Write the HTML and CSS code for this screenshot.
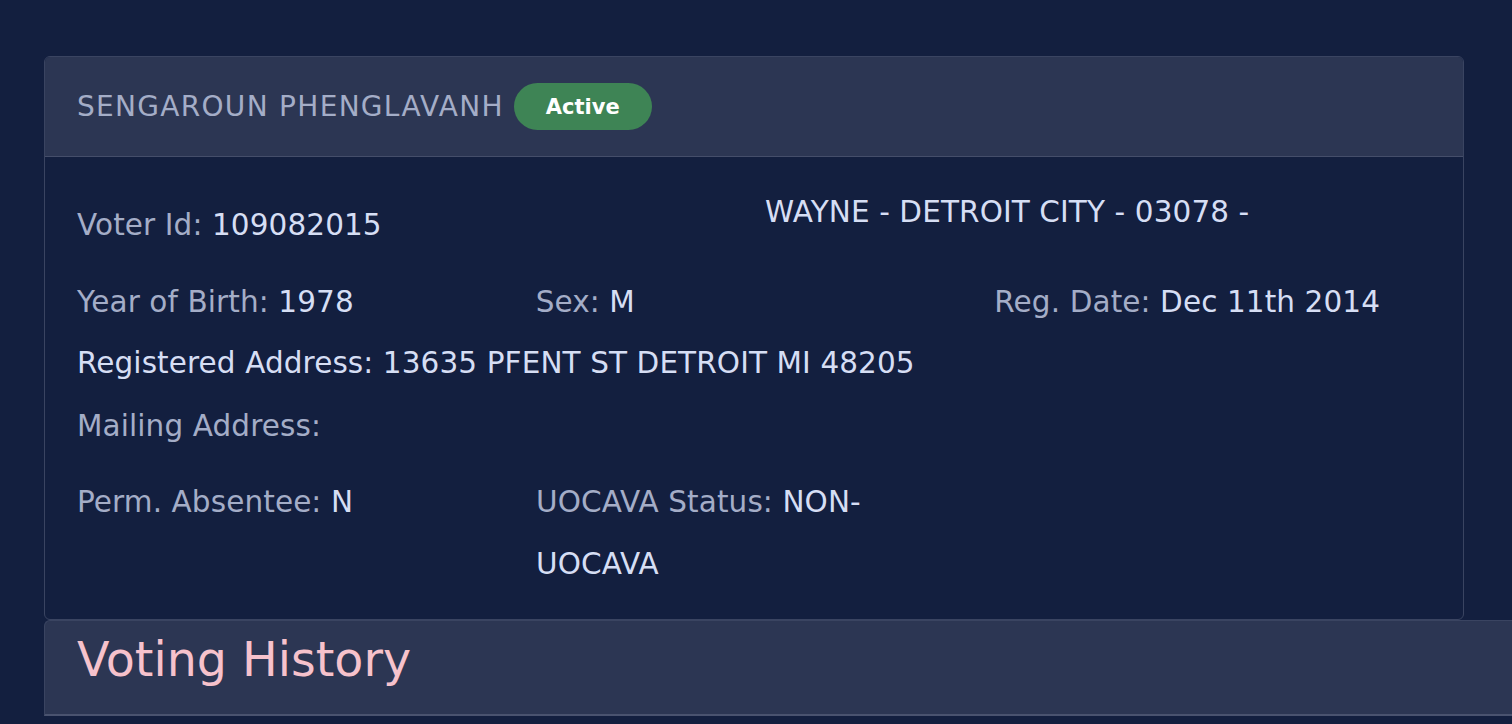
FILE: index.html
```html
<!DOCTYPE html>
<html lang="en">
<head>
<meta charset="utf-8">
<title>Voter</title>
<link rel="stylesheet" href="styles.css">
</head>
<body>
<main class="page">
  <section class="card">
    <header class="card-header">
      <span class="name">SENGAROUN PHENGLAVANH</span>
      <span class="badge">Active</span>
    </header>
    <div class="card-body">
      <div class="row row-id">
        <div class="col half id-col"><span class="label">Voter Id:</span> <span class="value">109082015</span></div>
        <div class="col half"><span class="value">WAYNE - DETROIT CITY - 03078 -</span></div>
      </div>
      <div class="row row-birth">
        <div class="col third"><span class="label">Year of Birth:</span> <span class="value">1978</span></div>
        <div class="col third"><span class="label">Sex:</span> <span class="value">M</span></div>
        <div class="col third"><span class="label">Reg. Date:</span> <span class="value">Dec 11th 2014</span></div>
      </div>
      <div class="row row-address">
        <div class="col full bright">Registered Address: 13635 PFENT ST DETROIT MI 48205</div>
      </div>
      <div class="row row-mail">
        <div class="col full"><span class="label">Mailing Address:</span></div>
      </div>
      <div class="row row-absentee">
        <div class="col third"><span class="label">Perm. Absentee:</span> <span class="value">N</span></div>
        <div class="col third uocava"><span class="label">UOCAVA Status:</span> <span class="value">NON-</span><span class="value">UOCAVA</span></div>
      </div>
    </div>
  </section>
  <section class="history">
    <h2 class="history-title">Voting History</h2>
  </section>
</main>
</body>
</html>
```
FILE: styles.css
```css
html, body {
  margin: 0;
  padding: 0;
  background: #131f3f;
  overflow: hidden;
  height: 100%;
}

body {
  font-family: "DejaVu Sans", "Open Sans", sans-serif;
  color: #d6def4;
}

.page {
  padding: 56px 0 0 44px;
}

.card {
  width: 1420px;
  box-sizing: border-box;
  border: 1px solid #3a4461;
  border-radius: 6px;
  background: #131f3f;
  overflow: hidden;
}

.card-header {
  height: 100px;
  box-sizing: border-box;
  background: #2c3653;
  border-bottom: 1px solid #454e6a;
  display: flex;
  align-items: center;
  padding-left: 32px;
}

.name {
  font-size: 28px;
  letter-spacing: 1.3px;
  color: #a4adc7;
  margin-bottom: 1px;
}

.badge {
  margin-left: 10px;
  height: 47px;
  padding: 0 32px;
  border-radius: 24px;
  background: #3e8455;
  color: #ffffff;
  font-size: 21px;
  font-weight: 700;
  display: flex;
  align-items: center;
}

.card-body {
  padding: 35px 10px 24px 32px;
  font-size: 29.5px;
  line-height: 40px;
  letter-spacing: 0.1px;
}

.row {
  display: flex;
}

.col.half { width: 688px; }
.col.third { width: 459px; }
.col.full { width: 100%; }

.id-col { margin-top: 13px; }

.label { color: #a4adc7; }
.value { color: #d6def4; }
.bright { color: #d6def4; }

.row-birth { margin-top: 37px; }
.row-address { margin-top: 21px; }
.row-mail { margin-top: 23px; }
.row-absentee { margin-top: 25px; line-height: 62px; }

.col.uocava {
  width: 459px;
  padding-right: 50px;
  box-sizing: border-box;
}

.history {
  margin-top: 0;
  width: 1520px;
  height: 96px;
  box-sizing: border-box;
  background: #2c3653;
  border-top: 1px solid #3a4461;
  border-left: 1px solid #3a4461;
  border-bottom: 2px solid #4a536f;
  border-top-left-radius: 6px;
  padding: 11px 0 0 32px;
}

.history-title {
  margin: 0;
  font-size: 47.5px;
  line-height: 56px;
  font-weight: 400;
  color: #f6c2cc;
}
```
